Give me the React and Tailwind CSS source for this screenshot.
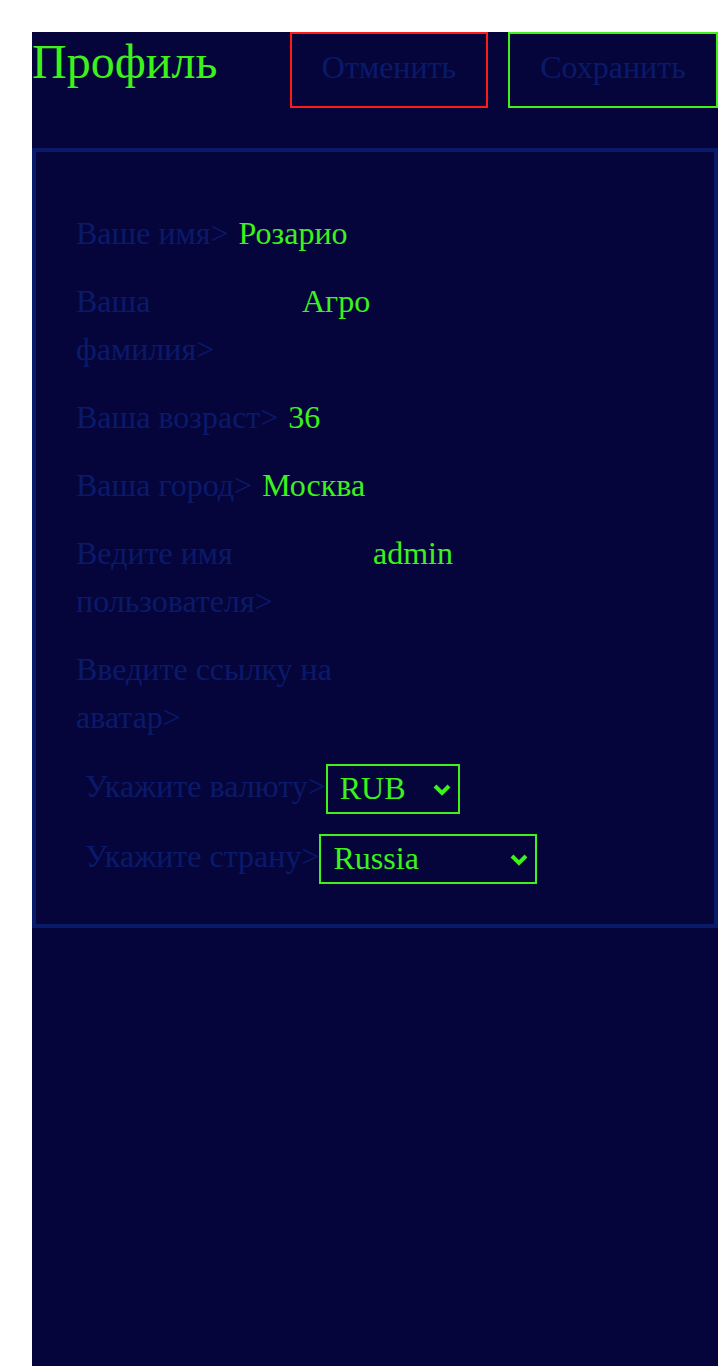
import React from 'react';

const rows = [
  { label: 'Ваше имя>', value: 'Розарио' },
  { label: 'Ваша фамилия>', value: 'Агро', w: 'w-[216px]' },
  { label: 'Ваша возраст>', value: '36' },
  { label: 'Ваша город>', value: 'Москва' },
  { label: 'Ведите имя пользователя>', value: 'admin', w: 'w-[287px]' },
  { label: 'Введите ссылку на аватар>', value: '', w: 'w-[290px]' },
];

function Chevron() {
  return (
    <svg width="20" height="13" viewBox="0 0 20 13" fill="none" className="shrink-0 mt-[3px]">
      <path d="M3 3 L10 10 L17 3" stroke="#3cf21a" strokeWidth="4" />
    </svg>
  );
}

function FakeSelect({ value, width }) {
  return (
    <div className={`flex items-center justify-between border-2 border-[#3cf21a] h-[50px] pl-[12px] pr-[6px] pb-[3px] text-[#3cf21a] ${width}`}>
      <span>{value}</span>
      <Chevron />
    </div>
  );
}

export default function App() {
  return (
    <div className="min-h-screen flex flex-col bg-white pt-8 pl-8 font-['Liberation_Serif',serif]">
      <div className="flex-1 bg-[#05053c]">
        {/* шапка */}
        <div className="flex justify-between items-start mb-10">
          <h1 className="text-[48px] leading-[60px] text-[#3cf21a]">Профиль</h1>
          <div className="flex gap-5">
            <button className="h-[76px] w-[198px] border-2 border-[#ff1a1a] pb-[6px] text-[32px] text-[#0a1a6b] flex items-center justify-center">
              Отменить
            </button>
            <button className="h-[76px] w-[210px] border-2 border-[#3cf21a] pb-[6px] text-[32px] text-[#0a1a6b] flex items-center justify-center">
              Сохранить
            </button>
          </div>
        </div>

        {/* форма */}
        <div className="border-4 border-[#0a1a6b] pl-10 pt-[57px] pb-10 text-[32px] leading-[48px]">
          <div className="flex flex-col gap-5">
            {rows.map((r) => (
              <div key={r.label} className="flex items-start gap-[10px]">
                <span className={`text-[#0a1a6b] shrink-0 ${r.w || ''}`}>{r.label}</span>
                <span className="text-[#3cf21a]">{r.value}</span>
              </div>
            ))}
            <div className="flex items-start ml-[9px] mt-[3px]">
              <span className="text-[#0a1a6b] leading-[44px]">Укажите валюту&gt;</span>
              <FakeSelect value="RUB" width="w-[134px]" />
            </div>
            <div className="flex items-start ml-[9px]">
              <span className="text-[#0a1a6b] leading-[44px]">Укажите страну&gt;</span>
              <FakeSelect value="Russia" width="w-[218px]" />
            </div>
          </div>
        </div>
      </div>
    </div>
  );
}
